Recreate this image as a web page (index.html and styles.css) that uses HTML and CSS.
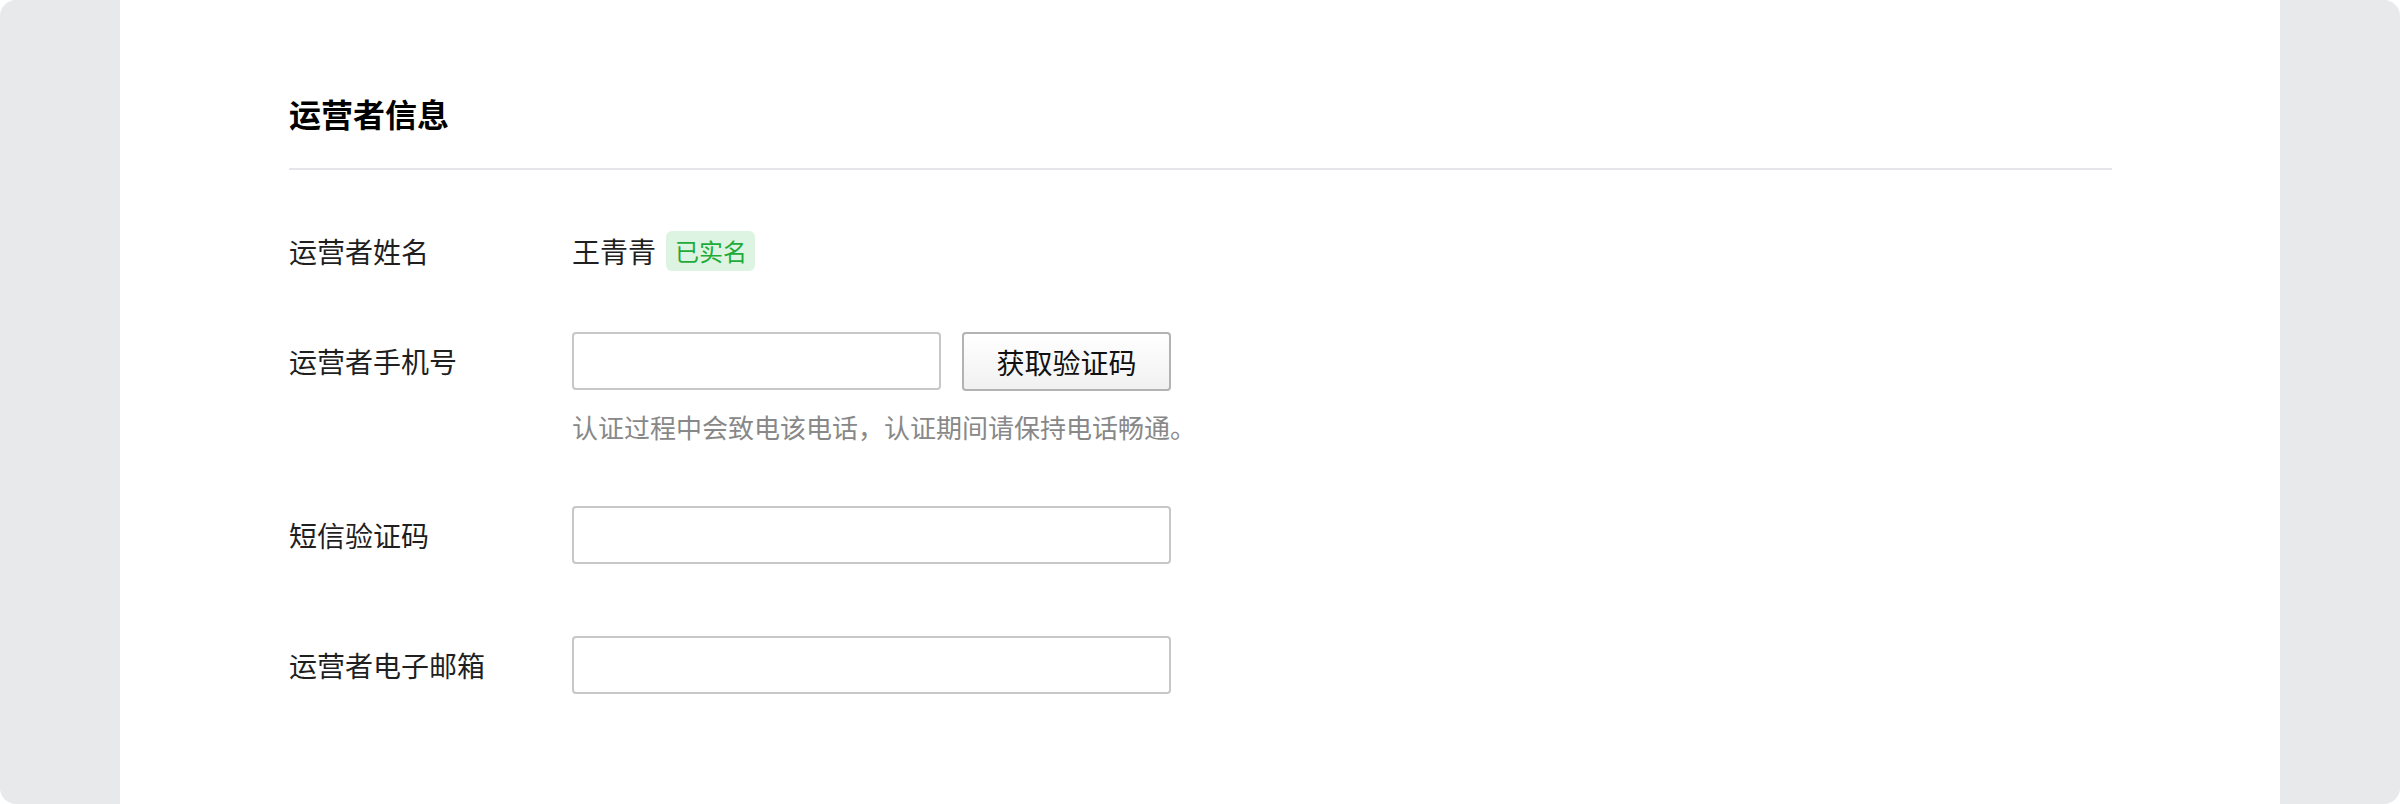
FILE: index.html
```html
<!DOCTYPE html>
<html lang="zh-CN">
<head>
    <meta charset="UTF-8">
    <meta name="viewport" content="width=device-width, initial-scale=1.0">
    <title>运营者信息</title>
    <link rel="stylesheet" href="styles.css">
</head>
<body>

<div class="page">
    <div class="panel">
        <h2 class="section-title">运营者信息</h2>

        <form class="info-form">
            <!-- 姓名 -->
            <div class="row row-name">
                <label class="row-label">运营者姓名</label>
                <div class="row-value">
                    <span class="name">王青青</span>
                    <span class="tag">已实名</span>
                </div>
            </div>

            <!-- 手机号 -->
            <div class="row row-phone">
                <label class="row-label" for="phone">运营者手机号</label>
                <div class="row-value">
                    <div class="phone-line">
                        <input type="tel" id="phone" class="text-input input-short">
                        <button type="button" class="btn">获取验证码</button>
                    </div>
                    <p class="hint">认证过程中会致电该电话，认证期间请保持电话畅通。</p>
                </div>
            </div>

            <!-- 验证码 -->
            <div class="row row-sms">
                <label class="row-label" for="sms">短信验证码</label>
                <div class="row-value">
                    <input type="text" id="sms" class="text-input">
                </div>
            </div>

            <!-- 邮箱 -->
            <div class="row row-mail">
                <label class="row-label" for="mail">运营者电子邮箱</label>
                <div class="row-value">
                    <input type="email" id="mail" class="text-input">
                </div>
            </div>
        </form>
    </div>
</div>

</body>
</html>
```

FILE: styles.css
```css
body {
    margin: 0;
    padding: 0;
    background-color: #fff;
    font-family: "Noto Sans CJK SC", "Noto Sans", sans-serif;
    color: #1f1f1f;
}
.page {
    height: 804px;
    background-color: #e8e9eb;
    border-radius: 16px;
    overflow: hidden;
}
.panel {
    width: 2160px;
    height: 100%;
    margin: 0 auto;
    box-sizing: border-box;
    padding: 91px 168px 0 169px;
    background-color: #fff;
}
.section-title {
    margin: 0;
    padding-bottom: 33px;
    font-size: 32px;
    line-height: 44px;
    font-weight: bold;
    color: #000;
    border-bottom: 2px solid #e5e5ea;
}
.info-form {
    display: flex;
    flex-direction: column;
}
.row {
    display: flex;
    align-items: flex-start;
}
.row-label {
    width: 283px;
    flex-shrink: 0;
    font-size: 28px;
    line-height: 58px;
}
.row-name {
    margin-top: 61px;
}
.row-name .row-label {
    line-height: 40px;
}
.row-name .row-value {
    display: flex;
    align-items: center;
    height: 40px;
}
.name {
    font-size: 28px;
}
.tag {
    margin-left: 10px;
    padding: 0 8px 0 9px;
    font-size: 24px;
    line-height: 40px;
    color: #1fab3a;
    background-color: #dcf4e1;
    border-radius: 6px;
}
.row-phone {
    margin-top: 61px;
}
.row-sms {
    margin-top: 61px;
}
.row-mail {
    margin-top: 72px;
}
.phone-line {
    display: flex;
    gap: 21px;
}
.text-input {
    width: 599px;
    height: 58px;
    box-sizing: border-box;
    padding: 0 12px;
    font-size: 28px;
    font-family: inherit;
    border: 2px solid #c7c7c7;
    border-radius: 4px;
    background-color: #fff;
    outline: none;
}
.input-short {
    width: 369px;
}
.btn {
    width: 209px;
    height: 59px;
    box-sizing: border-box;
    padding: 0;
    font-size: 28px;
    font-family: inherit;
    color: #111;
    border: 2px solid #b3b3b3;
    border-radius: 4px;
    background: linear-gradient(#ffffff, #f1f1f1);
    cursor: pointer;
}
.hint {
    margin: 18px 0 0 0;
    font-size: 26px;
    line-height: 36px;
    color: #888;
}
```
